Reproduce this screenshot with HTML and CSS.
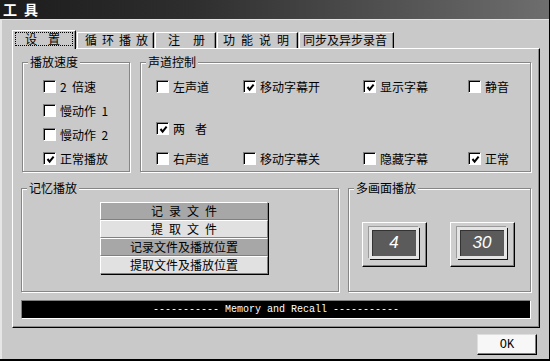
FILE: index.html
```html
<!DOCTYPE html>
<html lang="zh-CN">
<head>
  <meta charset="UTF-8">
  <title>工具</title>
  <link rel="stylesheet" href="styles.css">
</head>
<body>

  <div class="window">
    <!-- 标题栏 -->
    <div class="titlebar">工具</div>

    <div class="client">
      <!-- 选项卡 -->
      <div class="tabs">
        <div class="tab tab-active"><span class="focus">设置</span></div>
        <div class="tab tab-loop">循环播放</div>
        <div class="tab tab-reg">注册</div>
        <div class="tab tab-help">功能说明</div>
        <div class="tab tab-sync">同步及异步录音</div>
      </div>

      <div class="panel">
        <div class="row-top">
          <!-- 播放速度 -->
          <div class="group group-speed">
            <span class="group-title">播放速度</span>
            <div class="speed-list">
              <label class="check"><span class="box"></span>2&nbsp; 倍速</label>
              <label class="check"><span class="box"></span>慢动作&nbsp; 1</label>
              <label class="check"><span class="box"></span>慢动作&nbsp; 2</label>
              <label class="check"><span class="box checked"><svg viewBox="0 0 9 9"><polyline points="1.5,4 3.6,6.6 7.6,1.6"/></svg></span>正常播放</label>
            </div>
          </div>

          <!-- 声道控制 -->
          <div class="group group-channel">
            <span class="group-title">声道控制</span>
            <div class="channel-grid">
              <label class="check"><span class="box"></span>左声道</label>
              <label class="check"><span class="box checked"><svg viewBox="0 0 9 9"><polyline points="1.5,4 3.6,6.6 7.6,1.6"/></svg></span>移动字幕开</label>
              <label class="check"><span class="box checked"><svg viewBox="0 0 9 9"><polyline points="1.5,4 3.6,6.6 7.6,1.6"/></svg></span>显示字幕</label>
              <label class="check"><span class="box"></span>静音</label>
              <label class="check row-break"><span class="box checked"><svg viewBox="0 0 9 9"><polyline points="1.5,4 3.6,6.6 7.6,1.6"/></svg></span><span class="both">两者</span></label>
              <label class="check"><span class="box"></span>右声道</label>
              <label class="check"><span class="box"></span>移动字幕关</label>
              <label class="check"><span class="box"></span>隐藏字幕</label>
              <label class="check"><span class="box checked"><svg viewBox="0 0 9 9"><polyline points="1.5,4 3.6,6.6 7.6,1.6"/></svg></span>正常</label>
            </div>
          </div>
        </div>

        <div class="row-mid">
          <!-- 记忆播放 -->
          <div class="group group-memory">
            <span class="group-title">记忆播放</span>
            <div class="file-buttons">
              <div class="file-btn dark spaced">记录文件</div>
              <div class="file-btn light spaced">提取文件</div>
              <div class="file-btn dark">记录文件及播放位置</div>
              <div class="file-btn light">提取文件及播放位置</div>
            </div>
          </div>

          <!-- 多画面播放 -->
          <div class="group group-multi">
            <span class="group-title">多画面播放</span>
            <div class="num-row">
              <div class="num-btn"><div class="num-face">4</div></div>
              <div class="num-btn"><div class="num-face">30</div></div>
            </div>
          </div>
        </div>

        <!-- 状态栏 -->
        <div class="status">----------- Memory and Recall -----------</div>
      </div>

      <div class="footer">
        <button class="ok">OK</button>
      </div>
    </div>
  </div>

</body>
</html>
```
FILE: styles.css
```css
/* 基本样式 */
body {
  margin: 0;
  font-family: "Noto Sans CJK SC", sans-serif;
  font-size: 12px;
  color: #000;
}
.window {
  width: 550px;
  height: 361px;
  box-sizing: border-box;
  background: #c9c9c9;
  border-right: 1px solid #000;
  border-bottom: 2px solid #000;
  display: flex;
  flex-direction: column;
  box-shadow: inset 2px 0 0 #e6e6e6;
}

/* 标题栏 */
.titlebar {
  flex: none;
  height: 20px;
  box-sizing: border-box;
  padding-left: 3px;
  background: linear-gradient(to right, #1c1c1c 0%, #2e2e2e 35%, #6e6e6e 100%);
  border-bottom: 1px solid #e2e2e2;
  color: #fff;
  font-size: 14px;
  font-weight: bold;
  line-height: 19px;
  letter-spacing: 7px;
}

.client {
  flex: 1;
  padding: 10px 9px 0 12px;
  display: flex;
  flex-direction: column;
}

/* 选项卡 */
.tabs {
  display: flex;
  align-items: flex-end;
  height: 18px;
  position: relative;
  z-index: 1;
}
.tab {
  height: 16px;
  box-sizing: border-box;
  margin-right: 1px;
  border-top: 1px solid #fff;
  border-left: 1px solid #fff;
  border-right: 1px solid #000;
  box-shadow: inset -1px 0 0 #8a8a8a;
  line-height: 14px;
  white-space: nowrap;
  background: #c9c9c9;
}
.tab-active {
  width: 64px;
  height: 19px;
  margin-bottom: -1px;
}
.focus {
  display: block;
  height: 12px;
  margin: 1px 2px 0 2px;
  padding-left: 9px;
  border: 1px dotted #000;
  line-height: 12px;
  letter-spacing: 11px;
}
.tab-loop { width: 77px; padding-left: 7px; letter-spacing: 5px; }
.tab-reg  { width: 61px; padding-left: 12px; letter-spacing: 13px; }
.tab-help { width: 81px; padding-left: 5px; letter-spacing: 6px; }
.tab-sync { width: 95px; padding-left: 3px; }

/* 选项卡面板 */
.panel {
  width: 528px;
  height: 280px;
  box-sizing: border-box;
  border-top: 1px solid #fff;
  border-left: 1px solid #fff;
  border-right: 1px solid #000;
  border-bottom: 1px solid #000;
  box-shadow: inset -1px -1px 0 #8a8a8a;
  padding: 13px 8px 0 8px;
  display: flex;
  flex-direction: column;
}

/* 分组框 */
.group {
  position: relative;
  box-sizing: border-box;
  border: 1px solid #868686;
  box-shadow: inset 1px 1px 0 #fff, 1px 1px 0 #fff;
}
.group-title {
  position: absolute;
  top: -8px;
  left: 5px;
  padding: 0 2px;
  background: #c9c9c9;
  line-height: 14px;
  white-space: nowrap;
}

.row-top {
  display: flex;
  gap: 10px;
  padding-left: 1px;
  height: 110px;
}
.group-speed {
  width: 108px;
}
.group-channel {
  flex: 1;
}
.speed-list {
  display: flex;
  flex-direction: column;
  gap: 11px;
  padding: 17px 0 0 20px;
}
.channel-grid {
  display: grid;
  grid-template-columns: 87px 120px 105px auto;
  grid-template-rows: 42px 30px 13px;
  padding: 17px 0 0 15px;
}
.row-break {
  grid-column: 1 / -1;
}
.both {
  letter-spacing: 10px;
}

/* 复选框 */
.check {
  display: flex;
  align-items: center;
  gap: 4px;
  height: 13px;
  line-height: 13px;
  white-space: nowrap;
}
.box {
  flex: none;
  width: 13px;
  height: 13px;
  box-sizing: border-box;
  background: #fff;
  border: 1px solid;
  border-color: #808080 #fff #fff #808080;
  box-shadow: inset 1px 1px 0 #000;
  display: flex;
  align-items: center;
  justify-content: center;
}
.box svg {
  width: 9px;
  height: 9px;
  margin: 1px 0 0 1px;
}
.box polyline {
  fill: none;
  stroke: #000;
  stroke-width: 2;
}

.row-mid {
  display: flex;
  gap: 9px;
  margin-top: 16px;
  height: 104px;
}
.group-memory {
  width: 318px;
}
.group-multi {
  flex: 1;
}

/* 记忆播放按钮 */
.file-buttons {
  width: 168px;
  margin: 13px 0 0 78px;
  box-shadow: 1px 1px 0 #000;
}
.file-btn {
  height: 18px;
  box-sizing: border-box;
  border: 1px solid;
  border-color: #fff #808080 #808080 #fff;
  text-align: center;
  line-height: 16px;
  white-space: nowrap;
}
.file-btn.dark {
  background: #a7a7a7;
}
.file-btn.light {
  background: #e1e1e1;
}
.file-btn.spaced {
  letter-spacing: 6px;
  text-indent: 6px;
}

/* 多画面播放按钮 */
.num-row {
  display: flex;
  gap: 23px;
  padding: 33px 0 0 13px;
}
.num-btn {
  width: 65px;
  height: 45px;
  box-sizing: border-box;
  background: #cecece;
  border: 1px solid;
  border-color: #fff #000 #000 #fff;
  box-shadow: inset -1px -1px 0 #808080;
  padding: 4px 7px 7px 6px;
  display: flex;
}
.num-face {
  flex: 1;
  box-sizing: border-box;
  background: #5b5b5b;
  border: 3px solid #e4e4e4;
  box-shadow: 1px 1px 0 #111, -1px -1px 0 #9a9a9a, inset 1px 1px 0 #333;
  color: #fff;
  font-family: "Liberation Sans", sans-serif;
  font-style: italic;
  font-size: 17px;
  display: flex;
  align-items: center;
  justify-content: center;
}

/* 状态栏 */
.status {
  margin-top: 8px;
  height: 19px;
  box-sizing: border-box;
  background: #000;
  border: 1px solid;
  border-color: #808080 #fff #fff #808080;
  color: #fff;
  font-family: "Liberation Mono", monospace;
  font-size: 10px;
  line-height: 17px;
  text-align: center;
  white-space: pre;
}

/* 底部按钮 */
.footer {
  display: flex;
  justify-content: flex-end;
  padding: 6px 3px 0 0;
}
.ok {
  width: 60px;
  height: 21px;
  margin: 0;
  padding: 0;
  background: #f7f7f7;
  border: 1px solid;
  border-color: #dedede #000 #000 #dedede;
  box-shadow: inset -1px -1px 0 #808080;
  font-family: "Liberation Mono", monospace;
  font-size: 12px;
  color: #000;
}
```
